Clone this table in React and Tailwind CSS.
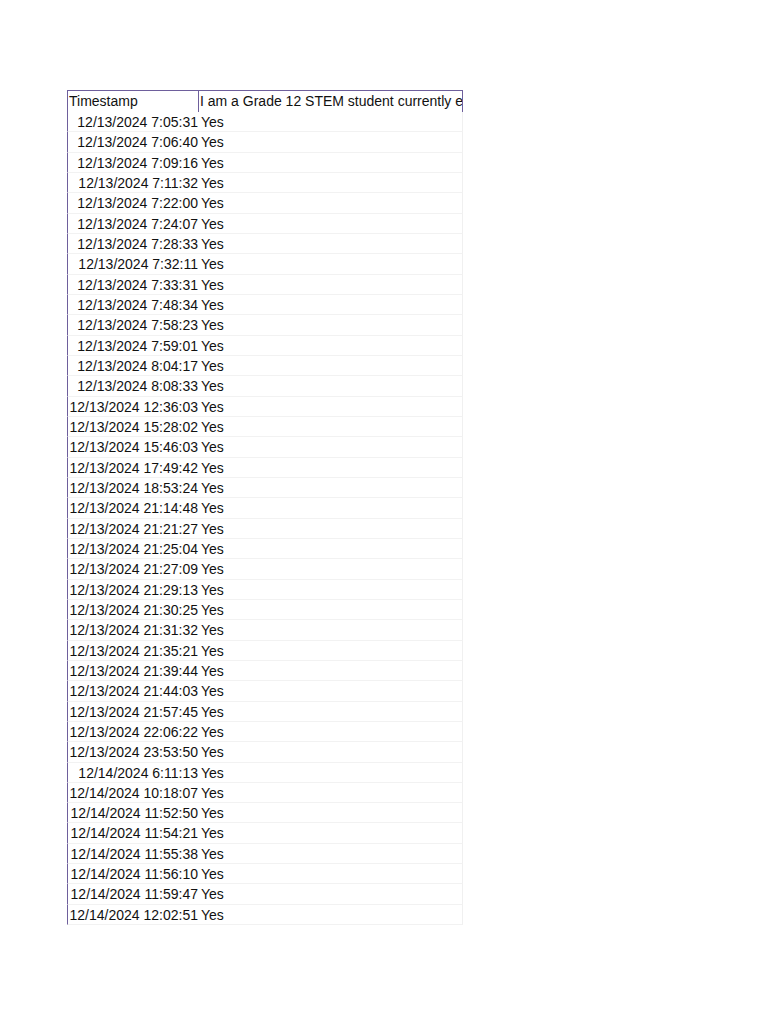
const rows = [
  '12/13/2024 7:05:31',
  '12/13/2024 7:06:40',
  '12/13/2024 7:09:16',
  '12/13/2024 7:11:32',
  '12/13/2024 7:22:00',
  '12/13/2024 7:24:07',
  '12/13/2024 7:28:33',
  '12/13/2024 7:32:11',
  '12/13/2024 7:33:31',
  '12/13/2024 7:48:34',
  '12/13/2024 7:58:23',
  '12/13/2024 7:59:01',
  '12/13/2024 8:04:17',
  '12/13/2024 8:08:33',
  '12/13/2024 12:36:03',
  '12/13/2024 15:28:02',
  '12/13/2024 15:46:03',
  '12/13/2024 17:49:42',
  '12/13/2024 18:53:24',
  '12/13/2024 21:14:48',
  '12/13/2024 21:21:27',
  '12/13/2024 21:25:04',
  '12/13/2024 21:27:09',
  '12/13/2024 21:29:13',
  '12/13/2024 21:30:25',
  '12/13/2024 21:31:32',
  '12/13/2024 21:35:21',
  '12/13/2024 21:39:44',
  '12/13/2024 21:44:03',
  '12/13/2024 21:57:45',
  '12/13/2024 22:06:22',
  '12/13/2024 23:53:50',
  '12/14/2024 6:11:13',
  '12/14/2024 10:18:07',
  '12/14/2024 11:52:50',
  '12/14/2024 11:54:21',
  '12/14/2024 11:55:38',
  '12/14/2024 11:56:10',
  '12/14/2024 11:59:47',
  '12/14/2024 12:02:51',
];

export default function App() {
  return (
    <div className="min-h-screen bg-white pl-[67px] pt-[90px] font-['Liberation_Sans',Arial,sans-serif] text-[14px] text-[#111]">
      <div className="w-[396px]">
        {/* header — second column is clipped like the sheet export */}
        <div className="flex h-[22px] border-t border-l border-r border-[#6e5f9c] leading-[20px]">
          <div className="w-[131px] shrink-0 border-r border-[#6e5f9c] pl-[1px] whitespace-nowrap">Timestamp</div>
          <div className="flex-1 overflow-hidden whitespace-nowrap pl-[1px]">
            I am a Grade 12 STEM student currently enrolled in this school
          </div>
        </div>

        {rows.map((ts) => (
          <div
            key={ts}
            className="flex h-[20.33px] border-l border-l-[#6e5f9c] border-b border-b-[#f2f2f2] border-r border-r-[#f0f0f0] leading-[20px]"
          >
            <div className="w-[131px] shrink-0 text-right pr-[1px] whitespace-nowrap">{ts}</div>
            <div className="flex-1 pl-[2px]">Yes</div>
          </div>
        ))}
      </div>
    </div>
  );
}
